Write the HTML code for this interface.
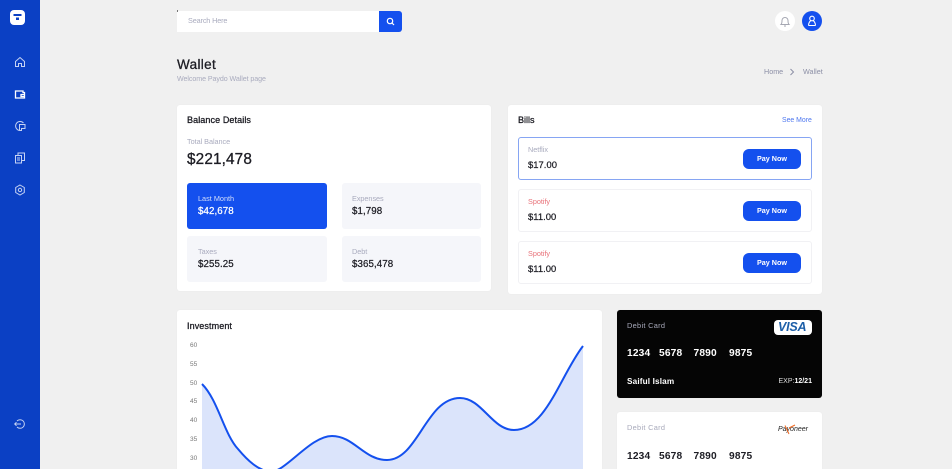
<!DOCTYPE html>
<html><head><meta charset="utf-8"><style>
html,body{margin:0;padding:0;width:952px;height:469px;overflow:hidden}
body{background:#f0f0f0;font-family:"Liberation Sans",sans-serif}
#w{position:relative;width:952px;height:469px;overflow:hidden;background:#f0f0f0}
.a{position:absolute;white-space:nowrap}
.c{position:absolute;background:#fff;border-radius:3px;box-shadow:0 0 2px rgba(0,0,0,.03)}
.g{color:#a9abbe;font-size:7.300px;line-height:10px;letter-spacing:-.05px}
.m{color:#1d1d24;font-size:9px;line-height:11px;letter-spacing:.1px;-webkit-text-stroke:.3px #1d1d24}
.n{color:#1d1d24;font-size:9.700px;line-height:14px;letter-spacing:.1px;-webkit-text-stroke:.25px #1d1d24}
.p{color:#1d1d24;font-size:9.400px;line-height:14px;letter-spacing:.05px;-webkit-text-stroke:.25px #1d1d24}
.d{font-size:10.200px;line-height:13px;font-weight:700;letter-spacing:.15px}
.l{font-size:6.500px;line-height:8px;color:#777;left:190px}
.b{position:absolute;background:#f5f6fa;border-radius:3px}
.btn{position:absolute;left:743px;width:58px;height:19.500px;background:#1450ee;border-radius:6px;color:#fff;font-size:7.200px;font-weight:700;text-align:center;line-height:19.500px}
.row{position:absolute;left:518px;width:292px;height:41px;border:1px solid #f1f1f4;border-radius:3px;background:#fff}
svg{position:absolute;overflow:visible}
</style></head><body><div id="w">
<div class="a" style="left:0;top:0;width:40px;height:469px;background:#0b40c4"></div>
<svg style="left:10px;top:10px" width="16" height="16" viewBox="0 0 16 16"><rect width="15" height="15" rx="4" fill="#fff"/><rect x="3.500" y="4" width="8" height="2" fill="#0b40c4"/><rect x="6" y="7.500" width="3" height="2.500" fill="#0b40c4"/></svg>
<svg style="left:14px;top:56px" width="12" height="12" viewBox="0 0 12 12" fill="none" stroke="#c5d2f3" stroke-width="1"><path d="M1.500 5.500 6 1.500l4.500 4v5h-3V7.500h-3v3h-3z"/></svg>
<svg style="left:14px;top:88px" width="12" height="12" viewBox="0 0 12 12" fill="none" stroke="#fff" stroke-width="1.300"><path d="M1.500 3h7.500v1.500h1.500v5.500h-9zM7 6.500h3.500v2H7z"/></svg>
<svg style="left:14px;top:120px" width="12" height="12" viewBox="0 0 12 12" fill="none" stroke="#c5d2f3" stroke-width="1"><path d="M9.500 3A4.500 4.500 0 1 0 6 10.500M5.500 4.500H11V8.500H7.500V10.500H5.500Z"/></svg>
<svg style="left:14px;top:152px" width="12" height="12" viewBox="0 0 12 12" fill="none" stroke="#c5d2f3" stroke-width="1"><path d="M1.500 3.500h6v7.500h-6zM4 3.500V1h6.500v7.500H7.500M3 6h3M3 8h3"/></svg>
<svg style="left:14px;top:184px" width="12" height="12" viewBox="0 0 12 12" fill="none" stroke="#c5d2f3" stroke-width="1"><path d="M6 1l4.300 2.500v5L6 11 1.700 8.500v-5z"/><circle cx="6" cy="6" r="1.700"/></svg>
<svg style="left:14px;top:418px" width="12" height="12" viewBox="0 0 12 12" fill="none" stroke="#c5d2f3" stroke-width="1"><path d="M3 3a4.300 4.300 0 1 1 0 6M.5 6h6.500M2.500 4.200.7 6l1.800 1.800"/></svg>

<div class="a" style="left:177px;top:11px;width:203px;height:21px;background:#fff"></div>
<div class="a" style="left:176.500px;top:10px;width:1.500px;height:1.500px;background:#777"></div>
<div class="a" style="left:379px;top:11px;width:23px;height:21px;background:#1450ee;border-radius:0 3px 3px 0"></div>
<svg style="left:386px;top:17px" width="9" height="9" viewBox="0 0 9 9" fill="none" stroke="#fff" stroke-width="1.200"><circle cx="4" cy="4" r="2.700"/><path d="M6 6l2 2"/></svg>
<div class="a g" style="left:188px;top:16px;letter-spacing:-.15px">Search Here</div>
<div class="a" style="left:775px;top:11px;width:20px;height:20px;border-radius:50%;background:#fff"></div>
<svg style="left:779px;top:15px" width="12" height="12" viewBox="0 0 12 12" fill="none" stroke="#a5a7b2" stroke-width="1"><path d="M2 9.500c1-1 1-2 1-4a3 3 0 0 1 6 0c0 2 0 3 1 4zM5 11h2"/></svg>
<div class="a" style="left:802px;top:11px;width:20px;height:20px;border-radius:50%;background:#1450ee"></div>
<svg style="left:806px;top:15px" width="12" height="12" viewBox="0 0 12 12" fill="none" stroke="#fff" stroke-width="1.100"><circle cx="6" cy="3.500" r="2.300"/><path d="M2.500 10.500c0-2.500 1.500-4.500 2.300-4.800M9.500 10.500c0-2.500-1.500-4.500-2.300-4.800M2.500 10.500h7"/></svg>

<div class="a" style="left:177px;top:56px;font-size:13.500px;line-height:17px;letter-spacing:.35px;color:#1d1d24;-webkit-text-stroke:.3px #1d1d24">Wallet</div>
<div class="a g" style="left:177px;top:74px;letter-spacing:-.07px;font-size:7.100px">Welcome Paydo Wallet page</div>
<div class="a" style="left:764px;top:67px;font-size:7.200px;line-height:10px;color:#8c8fa6">Home</div>
<svg style="left:789px;top:68px" width="6" height="8" viewBox="0 0 6 8" fill="none" stroke="#8c8fa6" stroke-width="1"><path d="M1.500 1l3 3-3 3"/></svg>
<div class="a" style="left:803px;top:67px;font-size:7.200px;line-height:10px;color:#8c8fa6">Wallet</div>

<div class="c" style="left:177px;top:105px;width:314px;height:186px"></div>
<div class="a m" style="left:187px;top:115px">Balance Details</div>
<div class="a g" style="left:187px;top:137px">Total Balance</div>
<div class="a" style="left:187px;top:150px;font-size:15.300px;line-height:20px;color:#1d1d24;letter-spacing:.15px;-webkit-text-stroke:.3px #1d1d24">$221,478</div>
<div class="b" style="left:187px;top:183px;width:140px;height:45.500px;background:#1450ee"></div>
<div class="b" style="left:342px;top:183px;width:139px;height:45.500px"></div>
<div class="b" style="left:187px;top:236px;width:140px;height:45.500px"></div>
<div class="b" style="left:342px;top:236px;width:139px;height:45.500px"></div>
<div class="a" style="left:198px;top:194px;font-size:7.300px;line-height:10px;color:#d5dffa">Last Month</div>
<div class="a n" style="left:198px;top:205px;color:#fff;-webkit-text-stroke:.25px #fff">$42,678</div>
<div class="a g" style="left:352px;top:194px">Expenses</div>
<div class="a n" style="left:352px;top:205px">$1,798</div>
<div class="a g" style="left:198px;top:247px">Taxes</div>
<div class="a n" style="left:198px;top:258px">$255.25</div>
<div class="a g" style="left:352px;top:247px">Debt</div>
<div class="a n" style="left:352px;top:258px">$365,478</div>

<div class="c" style="left:507.500px;top:104.500px;width:314px;height:189.500px"></div>
<div class="a m" style="left:518px;top:115px;letter-spacing:0">Bills</div>
<div class="a" style="left:782px;top:115.500px;font-size:6.900px;line-height:10px;color:#4f78ef">See More</div>
<div class="row" style="top:137px;height:41px;border-color:#86a5f3"></div>
<div class="row" style="top:189px"></div>
<div class="row" style="top:241px"></div>
<div class="a g" style="left:528px;top:145px">Netflix</div>
<div class="a g" style="left:528px;top:197px;color:#e8737a">Spotify</div>
<div class="a g" style="left:528px;top:249px;color:#e8737a">Spotify</div>
<div class="a p" style="left:528px;top:158px">$17.00</div>
<div class="a p" style="left:528px;top:210px">$11.00</div>
<div class="a p" style="left:528px;top:262px">$11.00</div>
<div class="btn" style="top:149px">Pay Now</div>
<div class="btn" style="top:201px">Pay Now</div>
<div class="btn" style="top:253px">Pay Now</div>

<div class="c" style="left:177px;top:310px;width:425px;height:170px"></div>
<div class="a m" style="left:187px;top:321px">Investment</div>
<div class="a l" style="top:342px">60</div>
<div class="a l" style="top:361px">55</div>
<div class="a l" style="top:380px">50</div>
<div class="a l" style="top:398px">45</div>
<div class="a l" style="top:417px">40</div>
<div class="a l" style="top:436px">35</div>
<div class="a l" style="top:455px">30</div>
<svg style="left:0;top:0" width="952" height="469" viewBox="0 0 952 469">
<path d="M202 384C218 400 224 434 238 449C248 461 258 470 270 472C286 472 310 436 332 436C354 436 364 460 387 460C418 460 426 398 460 398C482 398 492 430 514 430C546 430 560 376 583 346V480H202Z" fill="#dbe4fb"/>
<path d="M202 384C218 400 224 434 238 449C248 461 258 470 270 472C286 472 310 436 332 436C354 436 364 460 387 460C418 460 426 398 460 398C482 398 492 430 514 430C546 430 560 376 583 346" fill="none" stroke="#1450ee" stroke-width="2"/>
</svg>

<div class="c" style="left:617px;top:309.500px;width:205px;height:88px;background:#050505"></div>
<div class="a" style="left:627px;top:320.500px;font-size:7.400px;line-height:10px;color:#a8aabb;letter-spacing:.3px">Debit Card</div>
<div class="a" style="left:773.500px;top:319.500px;width:38.500px;height:15px;background:#fff;border-radius:4px"></div>
<div class="a" style="left:778px;top:320px;font-size:12.500px;line-height:15px;font-weight:700;font-style:italic;color:#1d5fa8;letter-spacing:-.2px">VISA</div>
<div class="a d" style="left:627px;top:347px;color:#fff">1234</div>
<div class="a d" style="left:659px;top:347px;color:#fff">5678</div>
<div class="a d" style="left:693.500px;top:347px;color:#fff">7890</div>
<div class="a d" style="left:729px;top:347px;color:#fff">9875</div>
<div class="a" style="left:627px;top:375.500px;font-size:8.200px;line-height:11px;font-weight:700;color:#fff;letter-spacing:.15px">Saiful Islam</div>
<div class="a" style="left:778.500px;top:376.500px;font-size:7px;line-height:10px;color:#ddd"><span>EXP:</span><b style="color:#fff">12/21</b></div>

<div class="c" style="left:617px;top:412px;width:205px;height:70px"></div>
<div class="a" style="left:627px;top:422.500px;font-size:7.400px;line-height:10px;color:#a8aabb;letter-spacing:.3px">Debit Card</div>
<div class="a" style="left:778px;top:424.500px;font-size:7px;line-height:10px;font-style:italic;color:#222">Payoneer</div>
<svg style="left:784px;top:423px" width="12" height="12" viewBox="0 0 12 12" fill="none" stroke="#f26a21" stroke-width="1"><path d="M1 2.500 5 11M5 5l6-3"/></svg>
<div class="a d" style="left:627px;top:449.500px;color:#1d1d24">1234</div>
<div class="a d" style="left:659px;top:449.500px;color:#1d1d24">5678</div>
<div class="a d" style="left:693.500px;top:449.500px;color:#1d1d24">7890</div>
<div class="a d" style="left:729px;top:449.500px;color:#1d1d24">9875</div>
</div></body></html>
